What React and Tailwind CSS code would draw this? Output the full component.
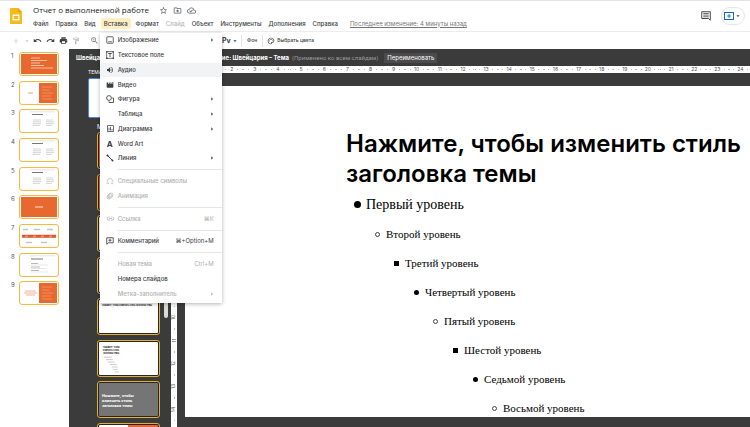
import React from 'react';
import {
  MdUndo, MdRedo, MdPrint, MdOutlineFormatPaint, MdVolumeUp, MdMovie, MdLink,
  MdArrowDropDown, MdArrowRight, MdStarBorder, MdOutlineDriveFileMove, MdOutlineCloudDone,
  MdZoomIn, MdAdd, MdOutlinePalette, MdOutlineInsertChart, MdOutlineAnimation,
} from 'react-icons/md';
import { Omega } from 'lucide-react';

const ImageIcon = () => (
  <svg viewBox="0 0 16 16" className="w-2 h-2" fill="none" stroke="currentColor" strokeWidth="1.6">
    <rect x="1.5" y="1.5" width="13" height="13" rx="1.5" />
    <path d="M4 11.5h8" strokeWidth="1.4" />
  </svg>
);

const TextBoxIcon = () => (
  <svg viewBox="0 0 16 16" className="w-2 h-2" fill="none" stroke="currentColor" strokeWidth="1.5">
    <rect x="1.5" y="1.5" width="13" height="13" />
    <path d="M4.5 5h7M8 5v7" strokeWidth="1.8" />
    <path d="M0 1.5h3M13 1.5h3M0 14.5h3M13 14.5h3" strokeWidth="2.5" />
  </svg>
);

const ShapeIcon = () => (
  <svg viewBox="0 0 16 16" className="w-2 h-2" fill="none" stroke="currentColor" strokeWidth="1.7">
    <circle cx="6" cy="6" r="4.8" />
    <path d="M12.5 6H15v9H6v-2.5" />
  </svg>
);

const LineIcon = () => (
  <svg viewBox="0 0 16 16" className="w-2 h-2" fill="none" stroke="currentColor" strokeWidth="2">
    <path d="M3 3l10 10" />
    <circle cx="3" cy="3" r="1.2" fill="currentColor" />
    <circle cx="13" cy="13" r="1.2" fill="currentColor" />
  </svg>
);

const CommentIcon = () => (
  <svg viewBox="0 0 16 16" className="w-2 h-2" fill="none" stroke="currentColor" strokeWidth="1.7">
    <path d="M1.5 1.5h13v10H5l-3.5 3z" />
    <path d="M8 3.5v6M5 6.5h6" />
  </svg>
);

const menuGroups = [
  [
    { label: 'Изображение', icon: <ImageIcon />, sub: true },
    { label: 'Текстовое поле', icon: <TextBoxIcon /> },
    { label: 'Аудио', icon: <MdVolumeUp className="w-2 h-2" />, active: true },
    { label: 'Видео', icon: <MdMovie className="w-2 h-2" /> },
    { label: 'Фигура', icon: <ShapeIcon />, sub: true },
    { label: 'Таблица', sub: true },
    { label: 'Диаграмма', icon: <MdOutlineInsertChart className="w-[9px] h-[9px]" />, sub: true },
    { label: 'Word Art', icon: <span className="pl-px text-[8px] font-bold">A</span> },
    { label: 'Линия', icon: <LineIcon />, sub: true },
  ],
  [
    { label: 'Специальные символы', icon: <Omega className="w-2 h-2" />, disabled: true },
    { label: 'Анимация', icon: <MdOutlineAnimation className="w-2 h-2" />, disabled: true },
  ],
  [{ label: 'Ссылка', icon: <MdLink className="w-[9px] h-[9px]" />, keys: '⌘K', disabled: true }],
  [{ label: 'Комментарий', icon: <CommentIcon />, keys: '⌘+Option+M' }],
  [
    { label: 'Новая тема', keys: 'Ctrl+M', disabled: true },
    { label: 'Номера слайдов' },
    { label: 'Метка-заполнитель', sub: true, disabled: true },
  ],
];

const InsertMenu = () => (
  <div className="absolute -left-px top-full mt-[4px] z-20 w-[122px] h-[270px] pb-[2px] bg-white text-[#3c4043] shadow-[0_1px_4px_rgba(0,0,0,0.3)] flex flex-col">
    {menuGroups.map((group, g) => (
      <React.Fragment key={g}>
        {g > 0 && (
          <div className="h-2 shrink-0 ml-[18px] flex items-center">
            <div className="h-px w-full bg-[#e6e6e6]" />
          </div>
        )}
        {group.map((item) => (
          <button
            key={item.label}
            type="button"
            disabled={item.disabled}
            className={`flex-1 flex items-center pl-[6px] pr-2 text-[6px] leading-none font-medium whitespace-nowrap ${item.active ? 'bg-[#f1f3f4]' : ''} ${item.disabled ? 'text-[#b0b0b0]' : ''}`}
          >
            <span className="w-3 flex items-center">{item.icon}</span>
            <span className="flex-1 text-left">{item.label}</span>
            {item.keys && <span className="font-normal">{item.keys}</span>}
            {item.sub && <MdArrowRight className="w-2 h-2 shrink-0 -mr-[2px]" />}
          </button>
        ))}
      </React.Fragment>
    ))}
  </div>
);

const menus = ['Файл', 'Правка', 'Вид', 'Вставка', 'Формат', 'Слайд', 'Объект', 'Инструменты', 'Дополнения', 'Справка'];

const Header = () => (
  <header className="h-8 shrink-0 flex items-start bg-white border-t border-b border-t-[#e4e4e4] border-b-[#ececec]">
    <svg viewBox="0 0 24 32" className="w-3 h-4 ml-[10px] mt-[7px] shrink-0">
      <path d="M2 0h14l8 8v22a2 2 0 0 1-2 2H2a2 2 0 0 1-2-2V2a2 2 0 0 1 2-2z" fill="#f5ba15" />
      <path d="M16 0l8 8h-8z" fill="#e8a10a" />
      <path d="M5 13h14v12H5z" fill="#fff" />
      <path d="M7.5 16h9v6h-9z" fill="#f5ba15" />
    </svg>
    <div className="flex-1 pl-[11px]">
      <div className="h-[17px] pt-px flex items-center gap-[5px] text-[#5f6368]">
        <h1 className="text-[8px] leading-none font-medium text-[#202124] mr-[5px] whitespace-nowrap font-['Open_Sans',sans-serif]">Отчет о выполненной работе</h1>
        <button type="button" aria-label="Пометить"><MdStarBorder className="w-[9px] h-[9px]" /></button>
        <button type="button" aria-label="Переместить"><MdOutlineDriveFileMove className="w-[9px] h-[9px]" /></button>
        <button type="button" aria-label="Состояние документа"><MdOutlineCloudDone className="w-[9px] h-[9px]" /></button>
      </div>
      <nav className="flex items-center gap-[7px] h-[11px] text-[6px] leading-none font-medium text-[#3c4043] whitespace-nowrap">
        {menus.map((name) => (
          <div key={name} className={name === 'Вставка' ? 'relative -mx-[2px]' : ''}>
            <button
              type="button"
              className={`block h-[11px] rounded-[2px] ${name === 'Вставка' ? 'px-[3px] bg-[#feefc3]' : ''} ${name === 'Слайд' ? 'text-[#b5b5b5]' : ''}`}
            >
              {name}
            </button>
            {name === 'Вставка' && <InsertMenu />}
          </div>
        ))}
        <a href="#" className="ml-[5px] underline font-normal text-[#777]">Последнее изменение: 4 минуты назад</a>
      </nav>
    </div>
    <button type="button" aria-label="Комментарии" className="mt-[10px] mr-[10px] text-[#444]">
      <svg viewBox="0 0 20 20" className="w-[10px] h-[10px]" fill="none" stroke="currentColor" strokeWidth="2">
        <path d="M1.5 1.5h17v17l-3.5-3.5H1.5z" />
        <path d="M4.5 5h11M4.5 8.2h11M4.5 11.5h11" strokeWidth="1.6" />
      </svg>
    </button>
    <button type="button" aria-label="Смотреть" className="mt-[6px] mr-[5px] h-[18px] w-6 rounded-full border border-[#e4e6ea] flex items-center justify-center">
      <svg viewBox="0 0 20 16" className="w-[10px] h-2" fill="none" stroke="#1a66d2" strokeWidth="2">
        <rect x="1" y="1" width="18" height="14" />
        <path d="M10 4.5v7M6.5 8h7" />
      </svg>
      <MdArrowDropDown className="w-2 h-2 text-[#444]" />
    </button>
  </header>
);

const Toolbar = () => (
  <div className="h-[17px] shrink-0 flex items-center bg-white text-[#3c4043] pl-3 text-[5px] font-medium leading-none">
    <div className="w-[210px] flex items-center">
      <div className="w-[21px] flex items-center text-[#c4c4c4]">
        <MdAdd className="w-2 h-2" />
        <MdArrowDropDown className="w-2 h-2 ml-[3px]" />
      </div>
      <button type="button" aria-label="Отменить" className="w-[13px]"><MdUndo className="w-[9px] h-[9px]" /></button>
      <button type="button" aria-label="Повторить" className="w-[13px]"><MdRedo className="w-[9px] h-[9px]" /></button>
      <button type="button" aria-label="Печать" className="w-[13px]"><MdPrint className="w-[9px] h-[9px]" /></button>
      <button type="button" aria-label="Копировать формат" className="w-[18px] text-[#b5b5b5]"><MdOutlineFormatPaint className="w-2 h-2" /></button>
      <button type="button" aria-label="Масштаб"><MdZoomIn className="w-[9px] h-[9px] text-[#777]" /></button>
    </div>
    <button type="button" className="w-[19px] flex items-center text-[7px] font-bold leading-none">
      Pv<MdArrowDropDown className="w-2 h-2 shrink-0" />
    </button>
    <button type="button" className="h-3 px-[5px] border-x border-[#e4e4e4]">Фон</button>
    <button type="button" className="flex items-center gap-[2px] ml-1 whitespace-nowrap">
      <MdOutlinePalette className="w-2 h-2" />
      Выбрать цвета
    </button>
  </div>
);

// Thumbnail drawings share a 36x20 canvas
const Columns = () => (
  <>
    <path d="M11 3.5h11" stroke="#777" strokeWidth="1" />
    <path d="M9 .8h25" stroke="#ccc" strokeWidth=".5" />
    <path d="M12 9h8M12 10.8h8M12 12.6h8M12 14.4h7M25 9h7M25 10.8h8M25 12.6h8M25 14.4h6" stroke="#ccc" strokeWidth=".8" />
  </>
);

const slides = [
  <>
    <path d="M0 0h36v20H0z" fill="#e8692f" />
    <path d="M10 4h9M10 6.5h16M10 9h9M10 11.5h13M10 14h22" stroke="#fff" strokeWidth=".8" opacity=".7" />
  </>,
  <>
    <path d="M18 0h18v20H18z" fill="#e8692f" />
    <path d="M7 10h5" stroke="#e8a184" />
    <path d="M21 4h10M21 7h8M21 10h11M21 13h9M21 16h10" stroke="#f09d76" strokeWidth=".7" />
  </>,
  <Columns />,
  <Columns />,
  <Columns />,
  <>
    <path d="M0 0h36v20H0z" fill="#e8692f" />
    <path d="M14 10h8" stroke="#fff" opacity=".8" />
  </>,
  <>
    <path d="M1 8.7h34v3H1z" fill="#e2562b" />
    <path d="M2 3.5h5M13 3.5h6M26 3.5h6M5 16.5h6M20 16.5h6" stroke="#c4c4c4" strokeWidth="1.6" />
    <path d="M4 10.2h28" stroke="#fff" strokeWidth=".5" strokeDasharray="3 5" />
  </>,
  <>
    <path d="M10 4h12" stroke="#777" />
    <path d="M9 .8h25" stroke="#ccc" strokeWidth=".5" />
    <path d="M10 8.5h7M10 12h9M10 15.5h8" stroke="#999" strokeWidth=".7" />
    <path d="M10 10h17M10 13.5h15M10 17h17" stroke="#ccc" strokeWidth=".5" />
  </>,
  <>
    <path d="M18 0h18v20H18z" fill="#e8692f" />
    <path d="M4 8h11M3 10h13M5 12h9" stroke="#eda88c" strokeWidth=".9" />
    <path d="M21 4h10M21 7h8M21 10h11M21 13h9M21 16h10" stroke="#f09d76" strokeWidth=".7" />
  </>,
];

const Filmstrip = () => (
  <aside className="w-[69px] shrink-0 bg-white">
    <ol className="h-[258px] mt-[3px] flex flex-col">
      {slides.map((art, i) => (
        <li key={i} className="flex-1 flex items-start">
          <span className="w-[19px] pl-[11px] text-[6px] leading-[8px] text-[#555]">{i + 1}</span>
          <button type="button" aria-label={`Слайд ${i + 1}`} className="w-10 h-6 p-px rounded-[3px] border border-[#efbd45] bg-[#fffaf0]">
            <svg viewBox="0 0 36 20" className="w-full h-full bg-white" preserveAspectRatio="none">{art}</svg>
          </button>
        </li>
      ))}
    </ol>
  </aside>
);

const layouts = [
  { bg: 'bg-[#e8692f]' },
  { bg: 'bg-[#e8692f]' },
  { bg: 'bg-white' },
  { bg: 'bg-white' },
  { bg: 'bg-white', body: <p className="pl-[3px] pt-1 text-[2px] leading-[3px] font-bold text-[#222]">Нажмите, чтобы изменить стиль заголовка темы</p> },
  {
    bg: 'bg-white',
    body: (
      <>
        <p className="pl-1 pt-1 w-[26px] text-[2px] leading-[3px] font-bold text-[#222]">Нажмите, чтобы изменить стиль заголовка темы</p>
        <svg viewBox="0 0 60 24" className="w-full h-6">
          <path d="M5 2h8M7 4.5h7M9 7h7M11 9.500h7M13 12h6M14 14.5h5M16 17h4" stroke="#bbb" strokeWidth=".8" />
        </svg>
      </>
    ),
  },
  { bg: 'bg-[#757575]', body: <p className="pl-[3px] pt-[10px] w-10 text-[4px] leading-[5px] font-bold text-white font-['Roboto',sans-serif]">Нажмите, чтобы изменить стиль заголовка темы</p> },
  { bg: 'bg-linear-to-r from-white from-50% to-[#e8692f] to-50%' },
];

const ThemePanel = () => (
  <aside className="w-[102px] shrink-0 bg-[#3b3b3b] text-white flex overflow-hidden">
    <div className="flex-1 min-w-0">
      <h2 className="h-[17px] pl-[7px] pt-[6px] text-[6px] leading-none font-bold">Швейцария</h2>
      <h3 className="pl-[19px] pt-px h-[12px] flex items-center text-[5px] leading-none">ТЕМА</h3>
      <div className="ml-[19px] w-[70px] h-10 rounded-[2px] border border-[#4a86e8] bg-white" />
      <h3 className="pl-[28px] h-[14px] pt-[6px] text-[6px] leading-none">МАКЕТЫ</h3>
      <ul className="pl-[28px] h-[332px] flex flex-col">
        {layouts.map((item, i) => (
          <li key={i} className="flex-1">
            <div className="w-[63px] h-[37px] rounded-[3px] border border-[#e0b03c] bg-[#2b2618] p-px">
              <div className={`h-full overflow-hidden rounded-[1px] ${item.bg}`}>{item.body}</div>
            </div>
          </li>
        ))}
      </ul>
    </div>
    <div className="w-[7px] shrink-0">
      <div className="mt-[20px] h-[249px] w-[4px] rounded-full bg-[#dadada]" />
    </div>
  </aside>
);

const range = (from, to) => Array.from({ length: to - from + 1 }, (_, i) => from + i);

const bullets = {
  big: 'w-[7px] h-[7px] rounded-full bg-black',
  disc: 'w-[5px] h-[5px] rounded-full bg-black',
  circle: 'w-[5px] h-[5px] rounded-full border border-[#444]',
  square: 'w-[5px] h-[5px] bg-black',
};

const levels = [
  ['Первый уровень', 'big'],
  ['Второй уровень', 'circle'],
  ['Третий уровень', 'square'],
  ['Четвертый уровень', 'disc'],
  ['Пятый уровень', 'circle'],
  ['Шестой уровень', 'square'],
  ['Седьмой уровень', 'disc'],
  ['Восьмой уровень', 'circle'],
];

const Editor = () => (
  <main className="flex-1 min-w-0 flex flex-col bg-[#3b3b3b]">
    <div className="h-[17px] shrink-0 flex items-center text-white text-[6px] leading-none whitespace-nowrap pl-[6px]">
      <span className="w-[112px] font-bold flex justify-end">Редактирование: Швейцария – Тема</span>
      <span className="ml-[3px] text-[#9a9a9a] font-['Roboto',sans-serif]">(Применено ко всем слайдам)</span>
      <button type="button" className="ml-[6px] h-[10px] px-[3px] bg-[#4b4b4b]">Переименовать</button>
    </div>
    <div className="h-[7px] shrink-0 flex items-center bg-white pl-[26px] -mr-[2px] text-[5px] leading-none text-[#555]">
      {range(1, 24).map((n) => (
        <div key={n} className="flex-1 flex items-center justify-between">
          <i className="w-px h-px bg-[#bbb]" />
          <i className="w-px h-px bg-[#bbb]" />
          <span>{n}</span>
          <i className="w-px h-px bg-[#bbb]" />
          <i className="w-px h-px bg-[#bbb]" />
        </div>
      ))}
    </div>
    <div className="flex-1 min-h-0 flex">
      <div className="w-[6px] shrink-0 overflow-hidden bg-white pt-[233px] text-[5px] leading-none text-[#555]">
        {range(10, 14).map((n) => (
          <div key={n} className="h-[23px] flex flex-col items-center justify-between">
            <i className="w-px h-px bg-[#bbb]" />
            <span className="-rotate-90">{n}</span>
            <i className="w-px h-px bg-[#bbb]" />
          </div>
        ))}
      </div>
      <section className="flex-1 mt-[13px] mb-[10px] ml-2 bg-white text-black pl-[161px] pt-[43px] whitespace-nowrap overflow-hidden">
        <h2 className="text-[24px] leading-[30px] font-semibold">
          Нажмите, чтобы изменить стиль
          <br />
          заголовка темы
        </h2>
        <ul className="font-['Liberation_Serif',serif] text-[11px]">
          {levels.map(([label, type], i) => (
            <li
              key={label}
              className={`flex items-center ${i === 0 ? 'h-[31px] text-[14px]' : 'h-[29px]'}`}
              style={{ paddingLeft: Math.round(2 + i * 19.6) }}
            >
              <span className="w-[18px] flex justify-center">
                <span className={bullets[type]} />
              </span>
              {label}
            </li>
          ))}
        </ul>
      </section>
    </div>
  </main>
);

const App = () => {
  return (
    <div className="h-screen flex flex-col overflow-hidden bg-white font-['Inter',sans-serif]">
      <Header />
      <Toolbar />
      <div className="flex-1 min-h-0 flex overflow-hidden">
        <Filmstrip />
        <ThemePanel />
        <Editor />
      </div>
    </div>
  );
};

export default App;
